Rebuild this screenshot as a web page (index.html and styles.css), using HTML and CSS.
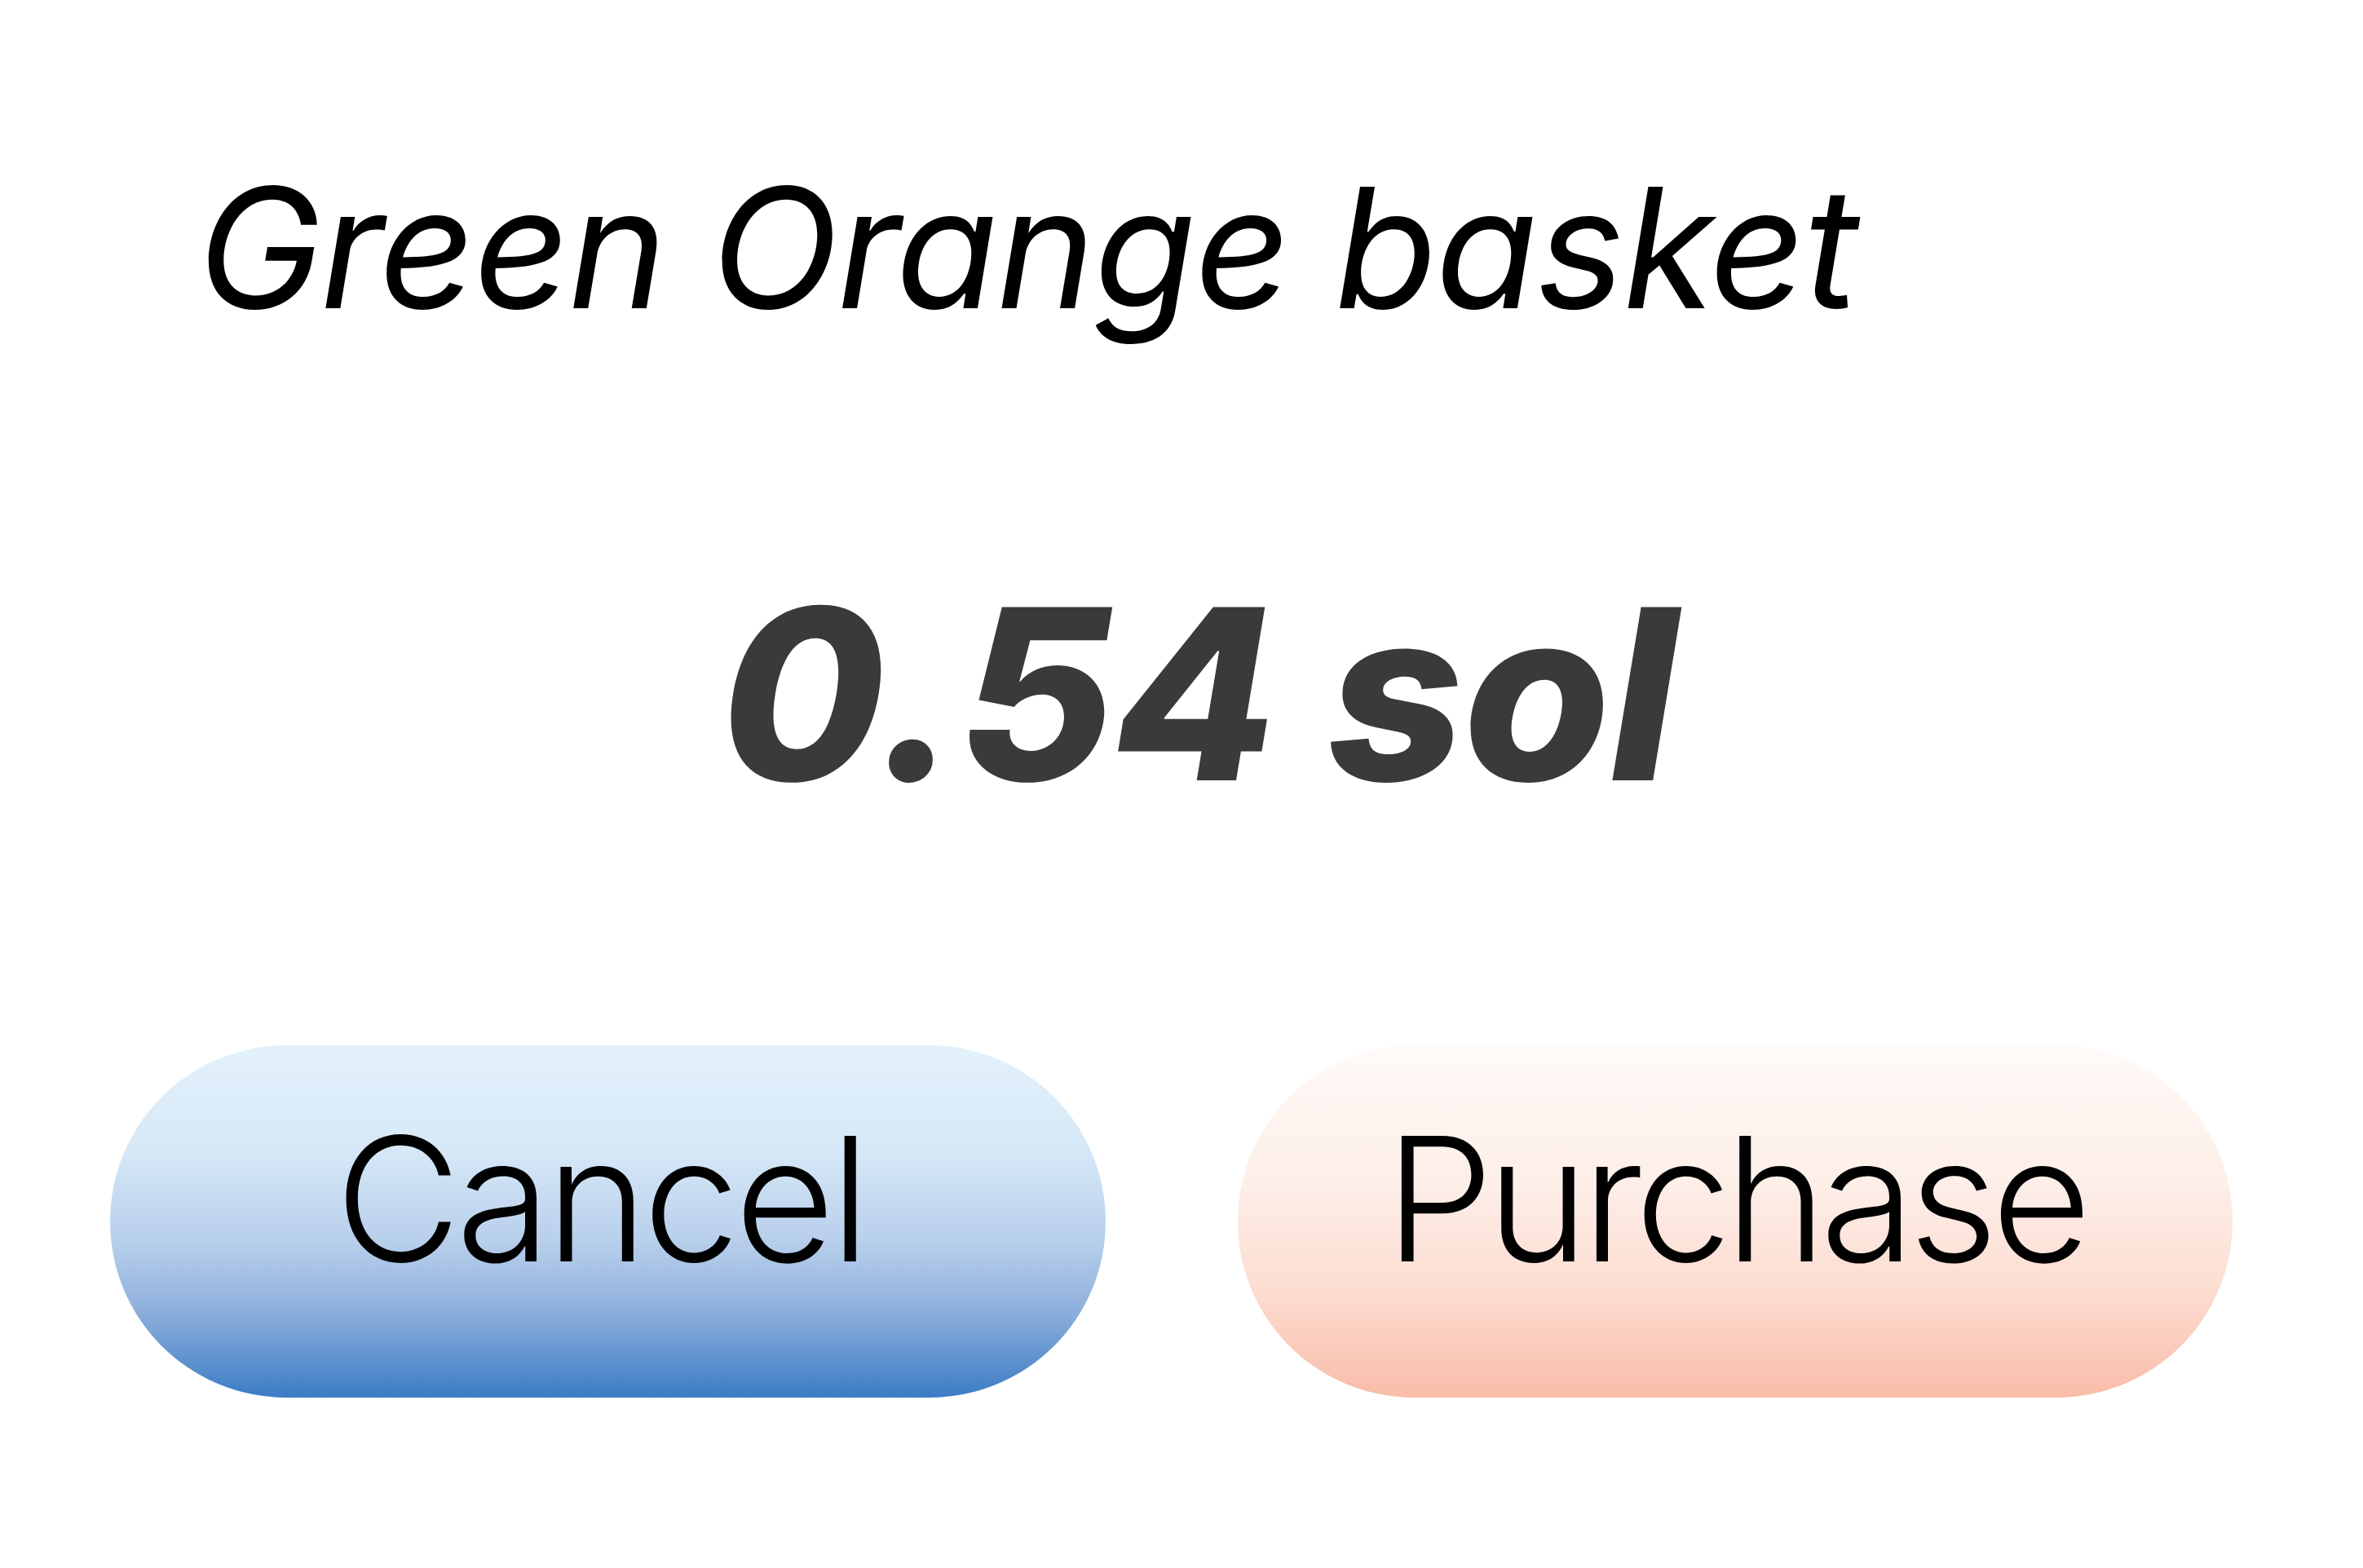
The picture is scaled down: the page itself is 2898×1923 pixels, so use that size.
FILE: index.html
```html
<!DOCTYPE html>
<html lang="en">

<head>
    <meta charset="UTF-8">
    <meta name="viewport" content="width=device-width, initial-scale=1.0">
    <title>Green Orange basket</title>
    <link rel="stylesheet" href="styles.css">
</head>

<body>
    <div class="checkout">
        <h1 class="item-name">Green Orange basket</h1>
        <p class="price">0.54 sol</p>
        <div class="actions">
            <button type="button" class="btn btn-cancel">Cancel</button>
            <button type="button" class="btn btn-purchase">Purchase</button>
        </div>
    </div>
</body>

</html>
```

FILE: styles.css
```css
body {
    font-family: Inter, "Open Sans", sans-serif;
    background-color: #fff;
    margin: 0;
}

.checkout {
    display: flex;
    flex-direction: column;
    padding: 201px 160px 0 135px;
}

.item-name {
    margin: 0;
    padding-left: 107px;
    font-size: 205px;
    font-weight: 400;
    font-style: italic;
    letter-spacing: -2px;
    line-height: 1;
    color: #000;
}

.price {
    margin: 299px 0 0;
    padding-left: 66px;
    text-align: center;
    font-size: 292px;
    font-weight: 800;
    font-style: italic;
    letter-spacing: -1px;
    line-height: 1;
    color: #3a3a3c;
}

.actions {
    display: flex;
    gap: 162px;
    margin-top: 285px;
}

.btn {
    flex: 1;
    height: 432px;
    padding: 0 0 56px;
    box-sizing: border-box;
    border: none;
    border-radius: 216px;
    font-family: inherit;
    font-size: 212px;
    font-weight: 300;
    line-height: 1;
    color: #000;
    text-align: center;
    cursor: pointer;
}

.btn-cancel {
    text-indent: -18px;
    letter-spacing: -6px;
    background: linear-gradient(#e3f1fb 0%, #d6e8f7 30%, #b9d0ec 55%, #8fb0dd 75%, #3b7cc4 100%);
}

.btn-purchase {
    letter-spacing: -8px;
    background: linear-gradient(#fffaf8 0%, #fdeee8 40%, #fcdcd0 70%, #f9bca9 100%);
}
```
